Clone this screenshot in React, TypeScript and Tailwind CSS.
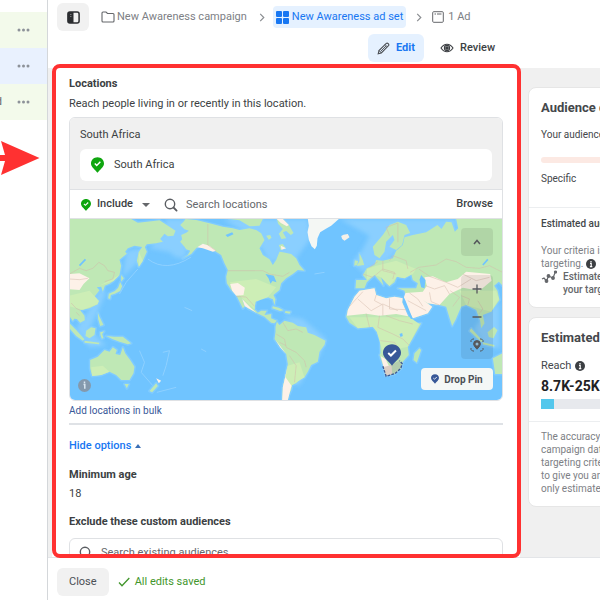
import type { ReactNode } from "react";

const ASIA_EAST =
  "M0 0H185L205 11L232 8L270 4L300 23L318 35L312 50L295 52L285 44L272 60L280 68L260 73L232 76L226 84L232 98L220 125L208 143L202 125L208 98L218 84L195 80L175 88L167 98L172 104L150 122L155 140L150 168L132 186L120 194L106 200L100 218L95 203L82 205L90 214L76 232L88 246L84 256L60 268L40 272L32 274L45 290L46 304L32 311L22 300L14 299L10 306L0 292Z";
const PACIFIC_ISLANDS =
  "M155 168l8 10-8 10zM152 190l6 12-6 14-16 8-12 4-2 12-6-2 2-14 18-8 10-10zM0 313L20 333L45 361L40 365L20 351L0 328ZM45 365L90 371L88 376L45 371ZM50 335L65 325L78 328L75 348L60 358L48 351ZM85 281L90 293L102 318L92 321L86 300ZM92 340l12-3-6 8 4 12-5 2-4-10zM110 351L135 353L160 353L185 373L175 376L150 368L130 361Z";
const AUSTRALIA =
  "M62 423L85 413L105 393L120 398L130 385L142 393L138 405L152 408L160 385L167 403L182 423L195 443L192 463L180 483L155 483L140 468L120 458L95 468L68 471L62 448ZM165 495L178 495L172 508ZM260 493L265 501L248 520L240 516ZM1270 418L1299 403V465L1277 465Z";
const NORTH_AMERICA =
  "M348 0L342 8L332 18L345 31L358 35L350 41L335 48L338 61L332 68L345 83L350 91L362 95L355 108L340 118L365 105L380 88L400 75L420 83L435 95L455 108L465 133L475 153L470 173L472 193L485 213L500 228L510 248L520 268L526 262L518 240L535 268L560 281L585 293L605 311L615 313L622 305L605 298L605 285L585 288L592 275L575 275L565 281L555 271L558 248L570 238L595 235L610 241L615 258L618 241L612 228L630 213L635 193L650 178L670 165L685 153L705 155L690 138L680 118L665 105L640 100L630 98L620 123L610 138L600 121L580 108L570 88L585 63L575 43L560 33L540 28L510 33L490 28L460 23L420 13L380 3ZM480 0l30 4 30 18 30-2 10-20zM610 262l18 4 14 8-10 2-24-8zM648 276l16 2-4 6-14-3z";
const BAFFIN =
  "M622 0H640L658 18L672 42L664 48L650 36L640 40L650 58L636 60L628 44L640 30L626 14ZM590 50l12-2 4 8-8 6zM628 78l12-3 8 12-14 6z";
const SOUTH_AMERICA =
  "M622 308L618 323L618 338L615 360L632 385L650 405L655 435L647 475L640 505L638 543H655L658 528L665 513L668 498L680 493L692 481L705 475L715 458L725 438L745 428L750 398L765 378L768 365L735 348L715 341L710 325L685 321L670 311L645 305L630 318Z";
const AFRICA =
  "M835 273L855 233L870 215L915 208L920 228L950 238L975 233L1000 238L998 250L1012 285L1030 310L1035 315L1055 313L1030 358L1015 383L1018 408L1000 428L995 448L975 465L948 471L942 443L930 408L933 403L932 363L922 338L910 323L865 328L840 311L830 293ZM1035 403L1050 388L1055 393L1042 431L1032 423Z";
const EURASIA =
  "M1299 0H1160L1166 28L1156 38L1146 10L1130 8L1116 30L1104 18L1070 40L1030 48L1005 55L1000 78L980 95L970 118L940 125L920 123L915 138L892 148L880 168L892 183L860 183L858 208L885 208L892 190L915 168L930 185L942 200L935 175L950 193L960 201L975 190L982 173L1005 178L1025 165L1030 183L1045 193L1040 208L985 208L1005 215L1008 228L1000 243L1030 298L1075 283L1088 263L1060 243L1075 253L1110 258L1130 263L1142 303L1148 321L1158 303L1175 263L1190 258L1220 273L1232 305L1235 328L1245 313L1240 288L1265 278L1290 243L1284 215L1274 200L1288 188L1299 200Z";
const SCANDINAVIA =
  "M985 8L960 18L940 48L910 83L915 108L930 118L945 98L950 68L970 48L975 63L960 83L980 93L998 78L1005 48L1022 42L1010 18ZM870 103L880 124L884 138L862 141L870 126ZM856 124l10 2-3 12-9 2zM1205 328L1240 366L1236 370L1200 336ZM1254 340L1274 324L1284 334L1272 358L1258 354ZM1240 370L1275 378L1274 383L1240 376Z";

const LAND = [ASIA_EAST, PACIFIC_ISLANDS, AUSTRALIA, NORTH_AMERICA, BAFFIN, SOUTH_AMERICA, AFRICA, EURASIA, SCANDINAVIA];

function WorldMap() {
  return (
    <svg viewBox="0 0 1299 543" preserveAspectRatio="xMidYMid slice" className="block h-full w-full" aria-hidden="true">
      <filter id="shelf" x="-10%" y="-10%" width="120%" height="120%">
        <feGaussianBlur stdDeviation="7" />
      </filter>
      <rect width="1299" height="543" fill="#70c4ff" />
      {/* shallow water */}
      <g fill="#93d3ff" opacity="0.75" filter="url(#shelf)">
        <path d="M290 0H360L350 110Q330 128 300 100L240 88L285 40ZM170 95L215 88L205 130L160 175Z" />
        <path d="M460 0H715L722 60L680 118L600 130L560 60ZM810 0H1160V40L1010 60L960 120L880 160L850 130L880 90L900 50Z" />
        <path d="M90 210L110 220L84 280L60 330L110 380L60 385L20 330L60 270ZM1240 290L1290 250V390L1240 370L1215 330Z" />
        <path d="M640 290L700 300L770 360L750 410L720 440L690 500L670 490L700 340Z" />
      </g>
      <g fill="none" stroke="#9bd6ff" strokeWidth="3" opacity="0.7">
        <path d="M235 120Q290 162 365 114M205 150L170 190L150 225M210 395L225 430L215 460L250 500M280 400L300 395L290 440L280 470M345 265L368 275M262 520L320 505M395 390L410 398M735 165L765 160" />
      </g>
      <g fill="#8bd0ff" stroke="#8bd0ff" strokeWidth="9" strokeLinejoin="round" opacity="0.6">
        {LAND.map((d) => (
          <path key={d} d={d} />
        ))}
      </g>
      <g fill="#bfe8b5">
        {LAND.map((d) => (
          <path key={d} d={d} />
        ))}
      </g>
      {/* lighter vegetation */}
      <g fill="#cdeeb6">
        <path d="M60 215L88 246L84 256L40 272L0 262V230ZM90 200L150 168L132 186ZM208 98L220 125L208 143Z" />
        <path d="M65 445L100 440L120 458L95 468L68 471ZM480 190L560 180L620 205L595 235L558 248L555 271L520 240ZM655 440L690 430L705 475L668 498L650 540L640 505Z" />
        <path d="M892 183L892 150L920 140L980 125L1040 150L1030 165L1005 178L982 173L960 201L935 175L915 168ZM1170 215L1280 215L1288 240L1265 278L1190 258Z" />
        <path d="M840 295L1020 295L1050 315L1015 383L940 400L922 338L910 323L865 328Z" />
      </g>
      {/* arid land, snow */}
      <g fill="#fdf1e8">
        <path d="M0 165L30 163L60 178L42 195L30 213L0 211ZM482 195L505 192L526 206L522 228L500 230L488 215ZM383 85L400 74L420 80L440 95L430 98L400 88ZM526 262L518 240L545 268L560 281Z" />
        <path d="M835 273L855 233L870 215L915 208L920 228L950 238L975 233L1000 238L998 250L1016 292L980 285L930 290L890 284L832 290Z" />
        <path d="M1065 175L1090 172L1108 180L1130 190L1165 180L1190 158L1262 165L1266 185L1230 215L1180 206L1140 225L1110 258L1075 253L1060 243L1088 263L1075 283L1030 298L1000 243L1008 222L1060 218L1072 200Z" />
        <path d="M618 362L632 385L650 405L655 435L648 475L666 500L655 543H638L640 505L647 475L655 435L650 405ZM934 412L948 420L958 440L956 466L948 471L942 443ZM622 0H640L658 18L652 22L634 12ZM260 478L275 485L268 493ZM634 80L650 88L636 92Z" />
      </g>
      <path fill="#f4f7f4" d="M715 0H808L785 20L768 30L752 40L744 58L742 80L736 91L726 82L718 62L714 40L718 20Z" />
      <path fill="#f4f0e8" d="M815 51L822 47L835 45L840 55L825 65L818 60Z" />
      <path fill="#70c4ff" d="M1055 168L1068 183L1065 208L1055 205L1050 182ZM985 182L1020 190L1026 202L985 200ZM468 48l20-8 4 6-18 8zM588 165l25 5 8 20-12-4-6 8-6-16zM990 345l8-3 2 9-7 3zM1000 228L1008 245L1030 300L1024 300L1000 250Z" />
      <path d="M1240 138L1255 121M30 140L48 121" stroke="#70c4ff" strokeWidth="5" fill="none" />
      {/* country borders */}
      <g fill="none" stroke="#d3b9aa" strokeWidth="2" opacity="0.75">
        <path d="M415 15V78L440 96M475 155H580L600 165L640 172L660 160M500 232L530 234L555 262M0 165L30 148L50 155L70 148L88 130L105 140L115 155L135 160L130 180L106 188M0 180L30 182L55 178M5 252L20 268L32 274M30 290L20 280" />
        <path d="M1022 160L1048 145L1100 138L1130 120L1160 128L1190 145L1230 148L1260 140L1299 160M1048 150L1080 172L1130 190L1165 205L1205 180M1180 165L1220 185L1260 175M1068 200L1095 210L1125 200L1140 225M960 50L950 25L985 12V70M880 165L910 175L940 150L975 160L970 180M900 145L925 128M940 125V155L980 165M960 125L970 110L1010 125L1015 150" />
        <path d="M865 240L905 275L940 255L985 275M920 228L915 245L940 258V290M880 218L840 262M960 238V270L1010 272M890 284L900 325M930 290L925 325L970 345M950 290L990 305L1030 315M970 345L1000 360L1020 380M933 365L975 370L990 395M940 405L980 410L995 440M1020 222L1045 240L1060 262M1080 220L1085 248L1110 258M1015 245L1070 275" />
        <path d="M640 310L655 335L680 330L700 340M620 345L645 360L650 385L680 400L705 425L710 445M660 410L680 440L675 490M650 380L630 370M1142 215L1170 235L1150 262M1175 230L1200 240L1195 258M1225 245L1240 270L1228 285" />
      </g>
      {/* selected country */}
      <path d="M940 442L955 450L966 436L980 430L990 425L998 434L994 448L976 464L950 472Z" fill="#b4cdae" />
      <path d="M942 444L966 438L968 464L950 470Z" fill="#dccfc5" />
      <path d="M940 442L950 472L976 464L994 448L998 434L990 425" fill="none" stroke="#3b5998" strokeWidth="4" strokeDasharray="8 4" />
    </svg>
  );
}

function PinCheck({ className }: { className: string }) {
  return (
    <svg viewBox="0 0 20 24" className={className} aria-hidden="true">
      <path d="M10 0C4.300 0 0 4.300 0 9.500C0 15.500 6.500 18.500 10 24C13.500 18.500 20 15.500 20 9.500C20 4.300 15.700 0 10 0Z" fill="currentColor" />
      <path d="M5.800 9.800L8.800 12.600L14.400 7" fill="none" stroke="#fff" strokeWidth="2.200" />
    </svg>
  );
}

function SearchIcon() {
  return (
    <svg viewBox="0 0 14 14" className="size-[14px] shrink-0 text-[#5a5d62]" fill="none" stroke="currentColor" strokeWidth="1.400" aria-hidden="true">
      <circle cx="6" cy="6" r="4.700" />
      <path d="M9.500 9.500L12.600 12.600" strokeWidth="1.800" strokeLinecap="round" />
    </svg>
  );
}

function InfoIcon() {
  return (
    <svg viewBox="0 0 10 10" className="inline-block size-[10px] shrink-0" aria-hidden="true">
      <circle cx="5" cy="5" r="5" fill="#3c3f43" />
      <path d="M5 2V3.300M4 4.400H5.200V7.600M3.900 7.700H6.300" stroke="#fff" strokeWidth="1.200" fill="none" />
    </svg>
  );
}

function Crumb({ icon, label, active }: { icon: ReactNode; label: string; active?: boolean }) {
  return (
    <a
      href="#"
      className={
        active
          ? "flex h-[22px] items-center gap-[3px] rounded bg-[#e5f1ff] px-[3px] text-[#1877f2]"
          : "flex h-[22px] items-center gap-[2px] text-[#7d8085]"
      }
    >
      {icon}
      {label}
    </a>
  );
}

function Separator() {
  return (
    <svg viewBox="0 0 6 10" className="h-[9px] w-[6px] shrink-0" fill="none" stroke="#8a8d91" strokeWidth="1.300" aria-hidden="true">
      <path d="M1 1L5 5L1 9" />
    </svg>
  );
}

function CampaignRows() {
  const rows = [
    { tint: "bg-[#f3faeb]", text: "" },
    { tint: "bg-[#e9f1fe]", text: "" },
    { tint: "bg-[#f3faeb]", text: "d" },
  ];

  return (
    <aside className="w-12 shrink-0 border-r border-[#d4d7da] bg-white pt-3">
      {rows.map((row, index) => (
        <div key={index} className={`flex h-9 items-center justify-end gap-[15px] overflow-hidden pr-[17px] ${row.tint}`}>
          <span className="text-[#65676b]">{row.text}</span>
          <button type="button" aria-label="More actions">
            <svg viewBox="0 0 13 4" className="h-1 w-[13px]" fill="#8d9299" aria-hidden="true">
              <circle cx="2" cy="2" r="1.500" />
              <circle cx="6.500" cy="2" r="1.500" />
              <circle cx="11" cy="2" r="1.500" />
            </svg>
          </button>
        </div>
      ))}
      <svg viewBox="0 0 40 34" className="mt-[21px] h-[34px] w-10" aria-hidden="true">
        <path d="M1 0L39.500 17L1 34L5 20H0V14H5Z" fill="#ff3131" />
      </svg>
    </aside>
  );
}

function Header() {
  return (
    <header className="flex h-[68px] shrink-0 flex-col bg-white pl-[9px] pt-[3px] whitespace-nowrap">
      <div className="flex h-7 items-center">
        <button type="button" aria-label="Toggle panel" className="flex h-7 w-8 items-center justify-center rounded-md bg-[#f1f1f1]">
          <svg viewBox="0 0 13 13" className="size-[13px]" aria-hidden="true">
            <rect x="0.900" y="0.900" width="11.200" height="11.200" rx="2" fill="none" stroke="#2b2d30" strokeWidth="1.500" />
            <path d="M1 1H6.500V12H1Z" fill="#2b2d30" />
            <path d="M3 3.500H4.500M3 5.500H4.500" stroke="#aaa" strokeWidth="0.600" />
          </svg>
        </button>
        <nav className="ml-3 flex items-center gap-2" aria-label="Breadcrumb">
          <Crumb
            label="New Awareness campaign"
            icon={
              <svg viewBox="0 0 14 12" className="h-3 w-[14px]" fill="none" stroke="#65676b" strokeWidth="1.100" aria-hidden="true">
                <path d="M1 2Q1 1 2 1H5L6.500 2.500H12Q13 2.500 13 3.500V10Q13 11 12 11H2Q1 11 1 10Z" />
              </svg>
            }
          />
          <div className="pl-1">
            <Separator />
          </div>
          <Crumb
            active
            label="New Awareness ad set"
            icon={
              <svg viewBox="0 0 13 13" className="size-[13px]" fill="#1877f2" aria-hidden="true">
                <rect width="6" height="6" rx="1" />
                <rect x="7" width="6" height="6" rx="1" />
                <rect y="7" width="6" height="6" rx="1" />
                <rect x="7" y="7" width="6" height="6" rx="1" />
              </svg>
            }
          />
          <div className="px-[2px]">
            <Separator />
          </div>
          <Crumb
            label="1 Ad"
            icon={
              <svg viewBox="0 0 12 12" className="mr-[2px] size-3" fill="none" stroke="#65676b" strokeWidth="1" aria-hidden="true">
                <rect x="0.700" y="0.700" width="10.600" height="10.600" rx="1" />
                <path d="M2.500 3H4M5 3H9.500" />
              </svg>
            }
          />
        </nav>
      </div>
      <div className="mt-[3px] flex gap-4 pl-[311px] font-bold">
        <button type="button" className="flex h-7 w-14 items-center justify-center gap-[6px] rounded-md bg-[#e5f1ff] text-[#1877f2]">
          <svg viewBox="0 0 13 13" className="size-[13px]" fill="none" stroke="#4b4f54" strokeWidth="1.100" aria-hidden="true">
            <path d="M1.200 11.800L2 8.600L9.300 1.400Q10.200 0.700 11.200 1.700Q12.300 2.800 11.500 3.700L4.300 11Z" />
            <path d="M8.100 2.600L10.400 4.900M2 8.600L4.300 11M3.500 9.500L9 4" strokeWidth="0.900" />
          </svg>
          Edit
        </button>
        <button type="button" className="flex h-7 items-center gap-[6px] font-medium text-[#3c3f43]">
          <svg viewBox="0 0 14 10" className="h-[10px] w-[14px]" fill="none" stroke="#3c3f43" strokeWidth="1.100" aria-hidden="true">
            <path d="M1 5Q3.500 1.200 7 1.200T13 5Q10.500 8.800 7 8.800T1 5Z" />
            <circle cx="7" cy="5" r="2.600" />
            <circle cx="7" cy="5" r="1.300" fill="#3c3f43" />
          </svg>
          Review
        </button>
      </div>
    </header>
  );
}

function MapPanel() {
  return (
    <div className="relative h-[181px] overflow-hidden">
      <WorldMap />
      <div className="absolute left-[313px] top-[124px] text-[#385898]">
        <PinCheck className="h-6 w-[18px]" />
      </div>
      <div className="absolute right-[9px] top-[9px] flex w-8 flex-col gap-[19px] text-[#55585c]">
        <button type="button" aria-label="Collapse map" className="flex h-7 items-center justify-center rounded bg-black/8">
          <svg viewBox="0 0 8 6" className="h-[6px] w-2" fill="none" stroke="currentColor" strokeWidth="1.500" aria-hidden="true">
            <path d="M1 5L4 1.500L7 5" />
          </svg>
        </button>
        <div className="flex flex-col overflow-hidden rounded bg-black/8">
          <button type="button" aria-label="Zoom in" className="flex h-7 items-center justify-center">
            <svg viewBox="0 0 10 10" className="size-[10px]" stroke="currentColor" strokeWidth="1.300" aria-hidden="true">
              <path d="M5 0.500V9.500M0.500 5H9.500" />
            </svg>
          </button>
          <button type="button" aria-label="Zoom out" className="flex h-7 items-center justify-center">
            <svg viewBox="0 0 10 10" className="size-[10px]" stroke="currentColor" strokeWidth="1.300" aria-hidden="true">
              <path d="M0.500 5H9.500" />
            </svg>
          </button>
          <button type="button" aria-label="Find my location" className="flex h-7 items-center justify-center">
            <svg viewBox="0 0 14 14" className="size-[14px]" fill="none" stroke="currentColor" strokeWidth="1" aria-hidden="true">
              <path d="M1 4V2.500L2.500 1H4M10 1H11.500L13 2.500V4M13 10V11.500L11.500 13H10M4 13H2.500L1 11.500V10" />
              <path d="M7 11.200Q3.600 8 3.600 6A3.400 3.400 0 0 1 10.400 6Q10.400 8 7 11.200Z" fill="currentColor" />
              <circle cx="7" cy="6" r="1.500" fill="#8fb9d3" stroke="none" />
            </svg>
          </button>
        </div>
      </div>
      <button
        type="button"
        className="absolute bottom-[10px] right-[9px] flex h-[22px] w-[72px] items-center justify-center gap-[5px] rounded-sm bg-[#f4f7f6] text-[10px] font-bold text-[#4b4f56]"
      >
        <span className="text-[#385898]">
          <PinCheck className="h-[10px] w-2" />
        </span>
        Drop Pin
      </button>
      <button type="button" aria-label="Map information" className="absolute bottom-2 left-2">
        <svg viewBox="0 0 13 13" className="size-[13px]" aria-hidden="true">
          <circle cx="6.500" cy="6.500" r="6.500" fill="#8499ad" />
          <path d="M6.500 2.500V4.200M5.500 5.400H6.800V9.700" stroke="#d9e6f0" strokeWidth="1.500" fill="none" />
        </svg>
      </button>
    </div>
  );
}

function LocationsForm() {
  return (
    <section className="h-full overflow-hidden bg-white px-[17px] pt-2 text-[#3c3f43]">
      <h2 className="h-4 font-bold leading-4">Locations</h2>
      <p className="mt-1 h-4 leading-4">Reach people living in or recently in this location.</p>

      <div className="mt-[5px] overflow-hidden rounded-md border border-[#dfe1e4]">
        <div className="bg-[#f0f0f0] px-[10px] pb-2 pt-[9px]">
          <h3 className="h-4 leading-4">South Africa</h3>
          <div className="mt-[6px] flex h-8 items-center gap-[10px] rounded-md bg-white px-[11px]">
            <span className="text-[#0fa60f]">
              <PinCheck className="h-4 w-[13px]" />
            </span>
            South Africa
          </div>
        </div>
        <div className="flex h-[30px] items-center border-y border-[#dfe1e4] bg-white pl-[11px] pr-[9px] pt-px">
          <span className="text-[#0fa60f]">
            <PinCheck className="h-3 w-[10px]" />
          </span>
          <div className="relative ml-[6px] flex w-[67px] items-center">
            <select aria-label="Include or exclude" className="h-5 w-full appearance-none bg-transparent font-medium">
              <option>Include</option>
            </select>
            <svg viewBox="0 0 8 4" className="pointer-events-none absolute right-[14px] h-1 w-2" fill="#65676b" aria-hidden="true">
              <path d="M0 0H8L4 4Z" />
            </svg>
          </div>
          <SearchIcon />
          <input
            type="text"
            aria-label="Search locations"
            placeholder="Search locations"
            className="ml-2 h-5 min-w-0 flex-1 bg-transparent outline-none placeholder:text-[#65686c]"
          />
          <button type="button" className="font-medium">
            Browse
          </button>
        </div>
        <MapPanel />
      </div>

      <a href="#" className="mt-[3px] block h-[14px] text-[10px] leading-[14px] text-[#385898]">
        Add locations in bulk
      </a>
      <hr className="mt-[5px] border-t-2 border-[#dfe2e6]" />
      <button type="button" className="mt-[13px] flex h-4 items-center gap-1 font-medium leading-4 text-[#1877f2]">
        Hide options
        <svg viewBox="0 0 6 4" className="h-1 w-[6px]" fill="#3b6fb5" aria-hidden="true">
          <path d="M0 4L3 0L6 4Z" />
        </svg>
      </button>
      <h3 className="mt-[13px] h-4 font-bold leading-4">Minimum age</h3>
      <p className="mt-[3px] h-4 leading-4">18</p>
      <label htmlFor="exclude-audiences" className="mt-3 block h-4 font-bold leading-4">
        Exclude these custom audiences
      </label>
      <div className="mt-2 flex h-[30px] items-center gap-2 rounded-md border border-[#dfe1e4] px-[9px]">
        <SearchIcon />
        <input
          id="exclude-audiences"
          type="text"
          placeholder="Search existing audiences"
          className="min-w-0 flex-1 bg-transparent outline-none placeholder:text-[#65686c]"
        />
      </div>
    </section>
  );
}

function EstimatesSidebar() {
  return (
    <aside className="w-[72px] shrink-0 overflow-hidden pt-[19px] text-[10px] text-[#44474b]">
      <div className="flex w-[212px] flex-col gap-[9px]">
        <section className="h-[221px] rounded-lg border border-[#e6e6e6] bg-white pt-3">
          <h2 className="px-3 text-[13px] font-bold leading-4">Audience definition</h2>
          <p className="mt-[11px] px-3 leading-4">Your audience is</p>
          <div className="mx-3 mt-[14px] h-[6px] rounded-full bg-[#fce9e3]" />
          <p className="mt-2 px-3 leading-4">Specific</p>
          <hr className="mt-5 border-[#eceef0]" />
          <p className="mt-2 px-3 font-medium leading-4">Estimated audience</p>
          <p className="mt-3 px-3 leading-[13px] text-[#7d8085]">
            Your criteria is
            <br />
            targeting. <InfoIcon />
          </p>
          <div className="flex gap-[6px] px-3 font-medium leading-[13px] text-[#65676b]">
            <svg viewBox="0 0 16 13" className="h-[13px] w-4 shrink-0" fill="#65676b" stroke="#65676b" strokeWidth="1.200" aria-hidden="true">
              <path d="M1 9L3 8L5.500 11L7.500 6L12 8L14.500 1.500" fill="none" />
              <circle cx="5.500" cy="11" r="1.300" />
              <circle cx="7.500" cy="6" r="1.300" />
              <circle cx="12" cy="8" r="1.300" />
              <circle cx="14.500" cy="2" r="1" />
            </svg>
            <p>
              Estimates
              <br />
              your targeting
            </p>
          </div>
        </section>
        <section className="h-[190px] rounded-lg border border-[#e6e6e6] bg-white pt-3">
          <h2 className="px-3 text-[13px] font-bold leading-4">Estimated daily results</h2>
          <p className="mt-3 flex items-center gap-1 px-3 text-[11px] leading-4">
            Reach <InfoIcon />
          </p>
          <p className="mt-1 px-3 text-[14px] font-bold leading-4 text-[#1f2225]">8.7K-25K</p>
          <div className="mx-3 mt-[5px] h-[10px] bg-[#e7e9ed]">
            <div className="h-full w-[13px] bg-[#54c7ec]" />
          </div>
          <hr className="mt-3 border-[#eceef0]" />
          <p className="mt-2 px-3 leading-[13px] whitespace-nowrap text-[#7d8085]">
            The accuracy of
            <br />
            campaign data
            <br />
            targeting criteria
            <br />
            to give you an
            <br />
            only estimates
          </p>
        </section>
      </div>
    </aside>
  );
}

export default function App() {
  return (
    <div className="flex h-screen overflow-hidden bg-white font-[Roboto,'Liberation_Sans',sans-serif] text-[11px]">
      <CampaignRows />
      <div className="flex min-w-0 flex-1 flex-col">
        <Header />
        <main className="flex min-h-0 flex-1 bg-[#f0f0f0] pl-1">
          <div className="relative mr-2 min-w-0 flex-1">
            <LocationsForm />
            <div className="pointer-events-none absolute -bottom-px -right-px -top-1 left-0 rounded-lg border-4 border-[#ff3131]" />
          </div>
          <EstimatesSidebar />
        </main>
        <footer className="flex h-[43px] shrink-0 items-center gap-[9px] border-t border-[#e3e5e8] bg-white pl-[9px] pt-[6px]">
          <button type="button" className="h-7 rounded-md bg-[#f1f1f1] px-3 text-[#4b4f54]">
            Close
          </button>
          <p className="flex items-center gap-[5px] text-[#42962c]">
            <svg viewBox="0 0 12 10" className="h-[10px] w-3" fill="none" stroke="#42962c" strokeWidth="1.300" aria-hidden="true">
              <path d="M1 5.500L4 8.800L11.300 1" />
            </svg>
            All edits saved
          </p>
        </footer>
      </div>
    </div>
  );
}
